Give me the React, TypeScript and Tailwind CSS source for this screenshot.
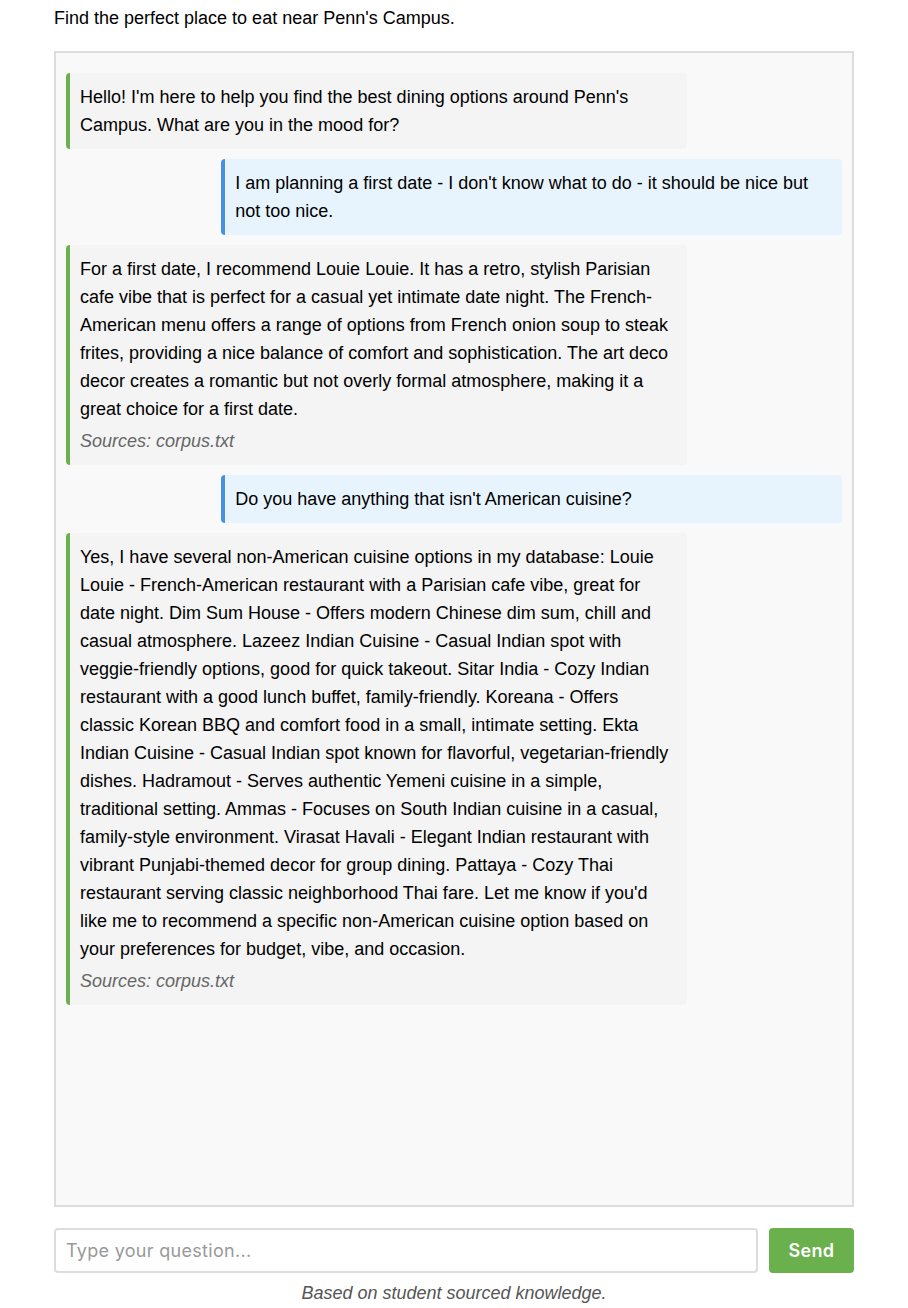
import React from "react";

type Msg = { role: "bot" | "user"; text: string; sources?: string };

const messages: Msg[] = [
  {
    role: "bot",
    text: "Hello! I'm here to help you find the best dining options around Penn's Campus. What are you in the mood for?",
  },
  {
    role: "user",
    text: "I am planning a first date - I don't know what to do - it should be nice but not too nice.",
  },
  {
    role: "bot",
    text: "For a first date, I recommend Louie Louie. It has a retro, stylish Parisian cafe vibe that is perfect for a casual yet intimate date night. The French-American menu offers a range of options from French onion soup to steak frites, providing a nice balance of comfort and sophistication. The art deco decor creates a romantic but not overly formal atmosphere, making it a great choice for a first date.",
    sources: "corpus.txt",
  },
  { role: "user", text: "Do you have anything that isn't American cuisine?" },
  {
    role: "bot",
    text: "Yes, I have several non-American cuisine options in my database: Louie Louie - French-American restaurant with a Parisian cafe vibe, great for date night. Dim Sum House - Offers modern Chinese dim sum, chill and casual atmosphere. Lazeez Indian Cuisine - Casual Indian spot with veggie-friendly options, good for quick takeout. Sitar India - Cozy Indian restaurant with a good lunch buffet, family-friendly. Koreana - Offers classic Korean BBQ and comfort food in a small, intimate setting. Ekta Indian Cuisine - Casual Indian spot known for flavorful, vegetarian-friendly dishes. Hadramout - Serves authentic Yemeni cuisine in a simple, traditional setting. Ammas - Focuses on South Indian cuisine in a casual, family-style environment. Virasat Havali - Elegant Indian restaurant with vibrant Punjabi-themed decor for group dining. Pattaya - Cozy Thai restaurant serving classic neighborhood Thai fare. Let me know if you'd like me to recommend a specific non-American cuisine option based on your preferences for budget, vibe, and occasion.",
    sources: "corpus.txt",
  },
];

export default function App() {
  return (
    <div className="min-h-screen bg-white text-black font-['Liberation_Sans',Arial,sans-serif] text-[18px]">
      <div className="max-w-[800px] mx-auto">
        {/* Header */}
        <p className="pt-[6px] leading-[24px] mb-[21px]">Find the perfect place to eat near Penn&apos;s Campus.</p>

        {/* Chat window */}
        <div className="h-[1156px] border-2 border-[#dddddd] bg-[#f9f9f9] px-[10px] py-[10px] flex flex-col gap-[10px] overflow-y-auto">
          {messages.map((m, i) =>
            m.role === "bot" ? (
              <div
                key={i}
                className="w-[80%] first:mt-[10px] bg-[#f4f4f4] border-l-4 border-[#6ab04c] rounded-[4px] px-[10px] py-[10px] leading-[28px]"
              >
                <div>{m.text}</div>
                {m.sources && (
                  <div className="italic text-[#666666] mt-[4px]">Sources: {m.sources}</div>
                )}
              </div>
            ) : (
              <div
                key={i}
                className="w-[80%] self-end bg-[#e8f4fd] border-l-4 border-[#4a90e2] rounded-[4px] px-[10px] py-[10px] leading-[28px]"
              >
                {m.text}
              </div>
            )
          )}
        </div>

        {/* Input row */}
        <div className="flex gap-[11px] mt-[21px]">
          <input
            type="text"
            placeholder="Type your question..."
            className="flex-1 h-[45px] border-2 border-[#dddddd] rounded-[4px] px-[10px] text-[18px] tracking-[0.3px] bg-white placeholder:text-[#999999] outline-none font-['Inter',sans-serif]"
          />
          <button className="w-[85px] h-[45px] bg-[#6ab04c] text-white font-semibold rounded-[4px] text-[18px] tracking-[0.3px] font-['Inter',sans-serif]">
            Send
          </button>
        </div>

        <p className="text-center italic text-[#555555] mt-[8px] leading-[24px]">Based on student sourced knowledge.</p>
      </div>
    </div>
  );
}
